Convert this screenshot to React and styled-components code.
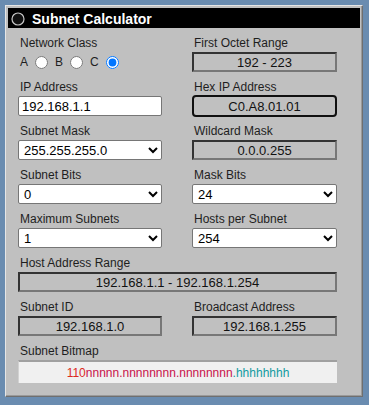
import React from "react";
import styled, { createGlobalStyle } from "styled-components";

const GlobalStyle = createGlobalStyle`
  html, body { margin: 0; padding: 0; background: #6a8cb0; }
  body { font-family: "Liberation Sans", Arial, sans-serif; }
  #root { padding: 5px 6px 8px 5px; }
`;

const Panel = styled.div`
  width: 358px;
  box-sizing: border-box;
  background: #c0c0c0;
  border: 1px solid;
  border-color: #e6e6e6 #6f6f6f #6f6f6f #e6e6e6;
  box-shadow: inset -1px -1px 0 #9a9a9a;
  padding: 2px 2px 2px 2px;
`;

const TitleBar = styled.div`
  height: 20px;
  box-sizing: border-box;
  background: #000;
  color: #fff;
  display: flex;
  align-items: center;
  gap: 7px;
  padding: 1px 0 0 3px;
  font-size: 14px;
  font-weight: bold;
`;

const Body = styled.div`
  display: grid;
  grid-template-columns: 144px 145px;
  column-gap: 30px;
  row-gap: 8px;
  padding: 8px 23px 11px 10px;
`;

const Field = styled.div`
  display: flex;
  flex-direction: column;
  grid-column: ${(p) => (p.$wide ? "1 / -1" : "auto")};
`;

const Label = styled.div`
  font-size: 12px;
  line-height: 15px;
  height: 15px;
  margin-bottom: 1px;
  padding-left: 2px;
  color: #1e1e1e;
  white-space: nowrap;
`;

const Display = styled.div`
  box-sizing: border-box;
  height: ${(p) => (p.$focused ? "22px" : "20px")};
  margin: ${(p) => (p.$focused ? "-1px 0" : "0")};
  display: flex;
  align-items: center;
  justify-content: center;
  font-size: 13px;
  color: #111;
  background: #c0c0c0;
  border: 2px solid;
  border-color: ${(p) => (p.$focused ? "#101010" : "#333 #777 #777 #333")};
  border-radius: ${(p) => (p.$focused ? "4px" : "0")};
`;

const TextInput = styled.input`
  box-sizing: border-box;
  width: 100%;
  height: 20px;
  margin: 0;
  padding: 0 3px;
  border: 1px solid #767676;
  border-radius: 2px;
  background: #fff;
  color: #000;
  font-family: "Liberation Sans", Arial, sans-serif;
  font-size: 13px;
  outline: none;
`;

const Select = styled.select`
  box-sizing: border-box;
  width: 100%;
  height: 20px;
  margin: 0;
  padding: 0 0 0 1px;
  border: 1px solid #767676;
  border-radius: 2px;
  background: #fff;
  color: #000;
  font-family: "Liberation Sans", Arial, sans-serif;
  font-size: 13px;
`;

const RadioRow = styled.div`
  height: 20px;
  display: flex;
  align-items: center;
  gap: 7px;
  padding-left: 2px;
  font-size: 12px;
  color: #1e1e1e;
`;

const Radio = styled.input`
  width: 13px;
  height: 13px;
  margin: 0;
`;

const Bitmap = styled.div`
  box-sizing: border-box;
  height: 23px;
  display: flex;
  align-items: center;
  justify-content: center;
  background: #f0f0f0;
  border-top: 2px solid #a0a0a0;
  border-left: 1px solid #d2d2d2;
  font-size: 12px;
`;

const Bits = styled.span`
  color: ${(p) => p.$color};
`;

const TitleIcon = () => (
  <svg width="14" height="14" viewBox="0 0 14 14">
    <circle cx="7" cy="7" r="6" fill="#111" stroke="#c8c8c8" strokeWidth="1.2" />
  </svg>
);

const SelectField = ({ label, value, options }) => (
  <Field>
    <Label>{label}</Label>
    <Select defaultValue={value}>
      {options.map((o) => (
        <option key={o} value={o}>
          {o}
        </option>
      ))}
    </Select>
  </Field>
);

const DisplayField = ({ label, value, wide, focused }) => (
  <Field $wide={wide}>
    <Label>{label}</Label>
    <Display $focused={focused}>{value}</Display>
  </Field>
);

export default function App() {
  return (
    <>
      <GlobalStyle />
      <Panel>
        <TitleBar>
          <TitleIcon />
          <span>Subnet Calculator</span>
        </TitleBar>
        <Body>
          <Field>
            <Label>Network Class</Label>
            <RadioRow>
              <span>A</span>
              <Radio type="radio" name="cls" />
              <span>B</span>
              <Radio type="radio" name="cls" />
              <span>C</span>
              <Radio type="radio" name="cls" defaultChecked />
            </RadioRow>
          </Field>
          <DisplayField label="First Octet Range" value="192 - 223" />

          <Field>
            <Label>IP Address</Label>
            <TextInput type="text" defaultValue="192.168.1.1" />
          </Field>
          <DisplayField label="Hex IP Address" value="C0.A8.01.01" focused />

          <SelectField
            label="Subnet Mask"
            value="255.255.255.0"
            options={["255.255.255.0", "255.255.255.128", "255.255.255.192"]}
          />
          <DisplayField label="Wildcard Mask" value="0.0.0.255" />

          <SelectField label="Subnet Bits" value="0" options={["0", "1", "2"]} />
          <SelectField label="Mask Bits" value="24" options={["24", "25", "26"]} />

          <SelectField label="Maximum Subnets" value="1" options={["1", "2", "4"]} />
          <SelectField label="Hosts per Subnet" value="254" options={["254", "126", "62"]} />

          <DisplayField
            label="Host Address Range"
            value="192.168.1.1 - 192.168.1.254"
            wide
          />

          <DisplayField label="Subnet ID" value="192.168.1.0" />
          <DisplayField label="Broadcast Address" value="192.168.1.255" />

          <Field $wide>
            <Label>Subnet Bitmap</Label>
            <Bitmap>
              <Bits $color="#dc2a22">110</Bits>
              <Bits $color="#c8104a">nnnnn.nnnnnnnn.nnnnnnnn</Bits>
              <Bits $color="#109aa0">.hhhhhhhh</Bits>
            </Bitmap>
          </Field>
        </Body>
      </Panel>
    </>
  );
}
